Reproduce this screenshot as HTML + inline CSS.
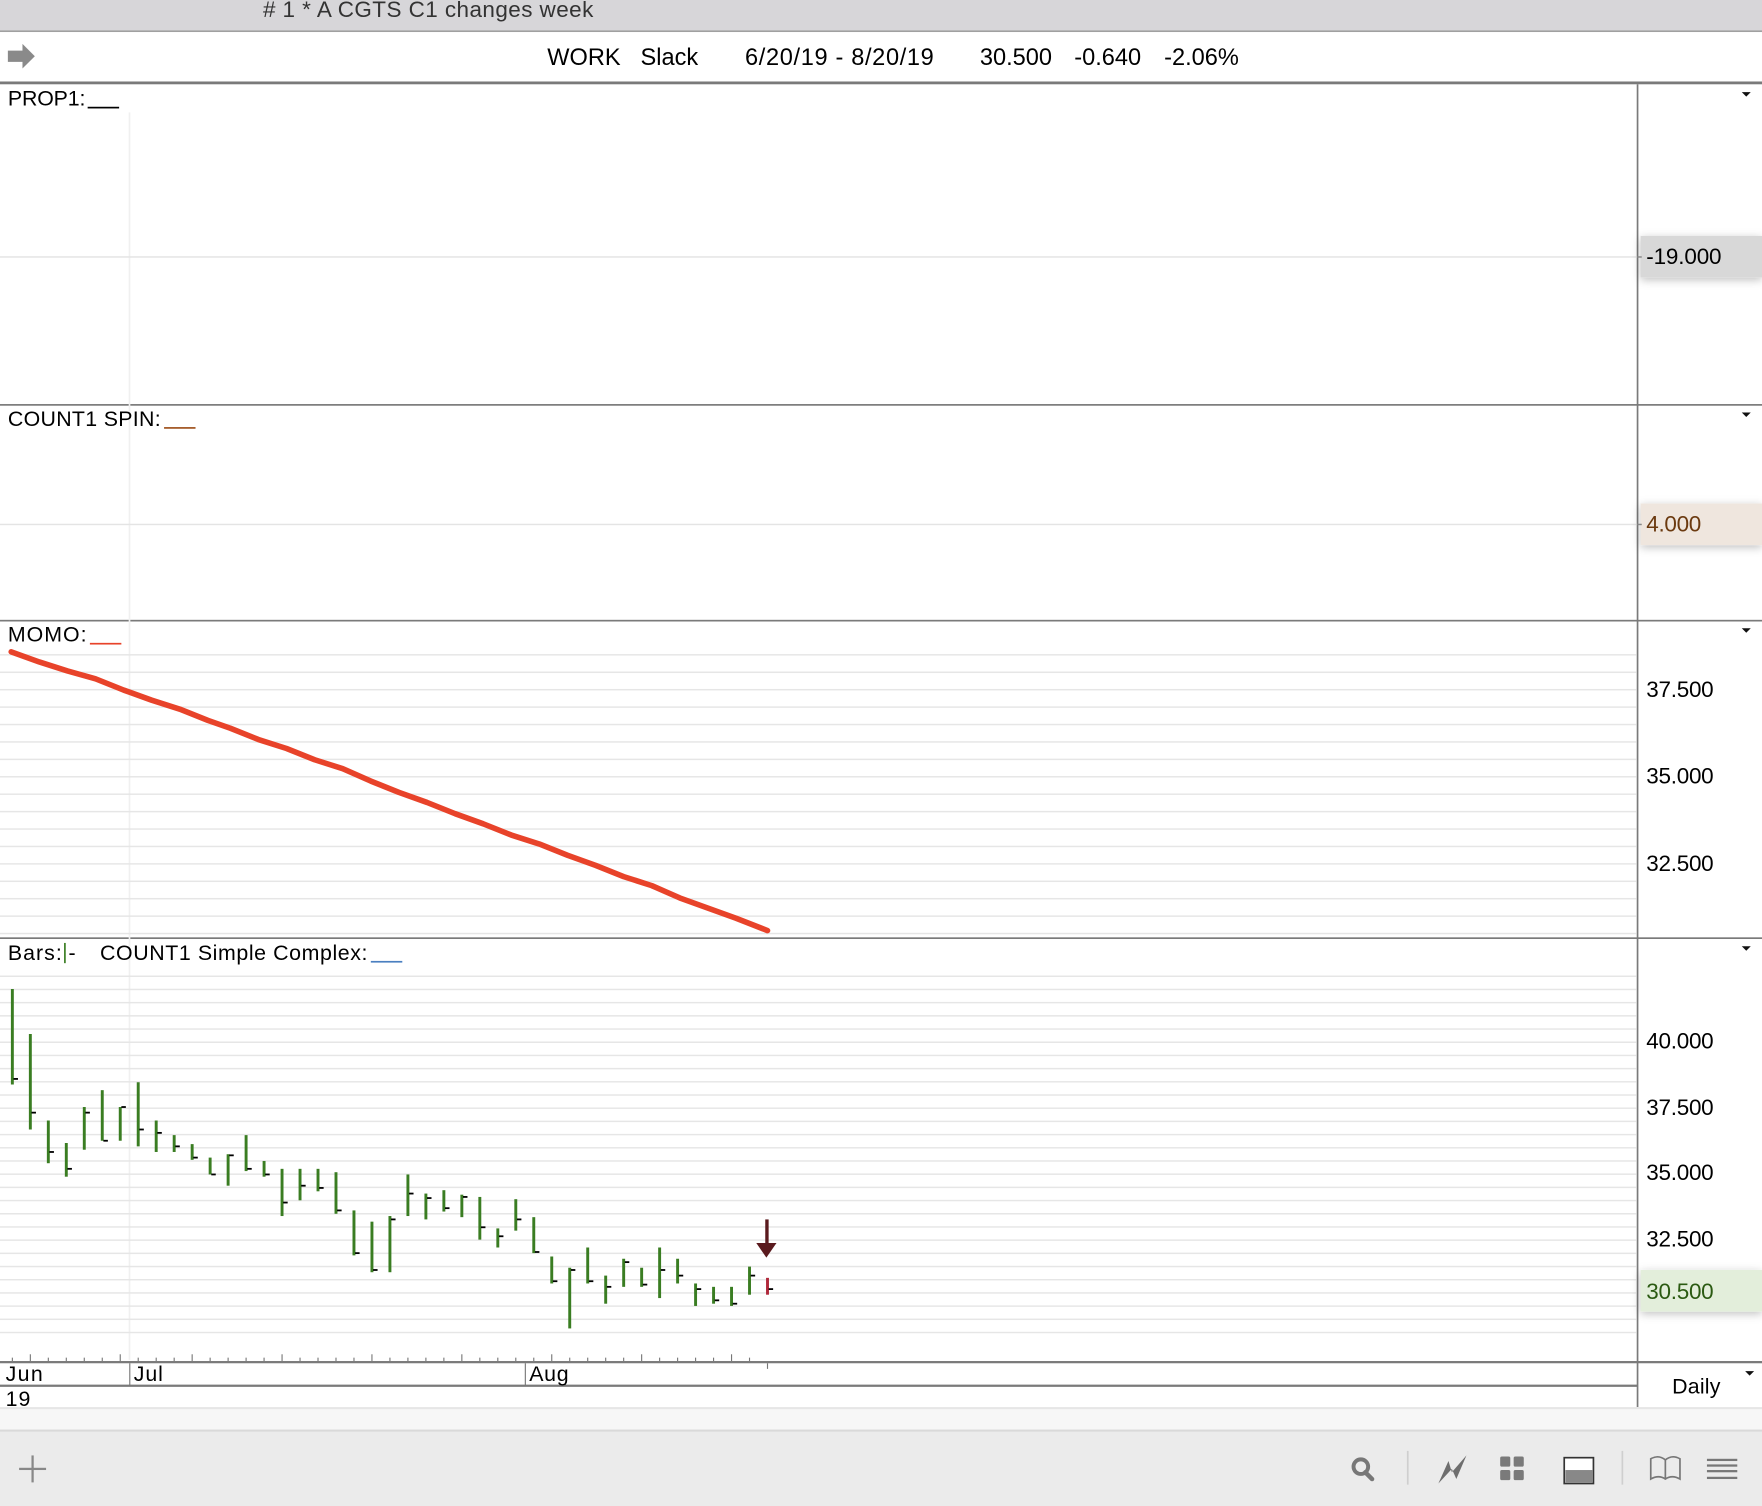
<!DOCTYPE html>
<html><head><meta charset="utf-8">
<style>
html,body{margin:0;padding:0;background:#fff;}
svg{display:block;}
text{font-family:"Liberation Sans",Arial,sans-serif;}
</style></head>
<body>
<svg width="1762" height="1506" viewBox="0 0 1568 1340" preserveAspectRatio="none" xmlns="http://www.w3.org/2000/svg">
<defs>
<pattern id="gm" patternUnits="userSpaceOnUse" x="0" y="582" width="10" height="15.5"><rect width="10" height="1.3" fill="#e6e6e6"/></pattern>
<pattern id="gb" patternUnits="userSpaceOnUse" x="0" y="868" width="10" height="11.74"><rect width="10" height="1.3" fill="#e6e6e6"/></pattern>
<filter id="sh" x="-10%" y="-60%" width="120%" height="220%"><feDropShadow dx="0" dy="2" stdDeviation="4" flood-color="#000" flood-opacity="0.25"/></filter>
</defs>
<rect width="1568" height="1340" fill="#fff"/>
<rect x="0" y="0" width="1568" height="27" fill="#d7d6d9"/>
<text x="234" y="15" font-size="20" fill="#333" textLength="294">#  1 * A CGTS  C1 changes week</text>
<rect x="0" y="27" width="1568" height="1.5" fill="#a0a0a0"/>
<path d="M7 45 H20 V39 L31 50 L20 61 V55 H7 Z" fill="#8a8a8a"/>
<g font-size="21" fill="#000">
<text x="487" y="58">WORK</text>
<text x="570" y="58">Slack</text>
<text x="663" y="58" textLength="168">6/20/19 - 8/20/19</text>
<text x="872" y="58">30.500</text>
<text x="956" y="58">-0.640</text>
<text x="1036" y="58">-2.06%</text>
</g>
<rect x="0" y="72.5" width="1568" height="2.5" fill="#7a7a7a"/>

<rect x="1456.5" y="75" width="1.5" height="1177" fill="#7a7a7a"/>
<rect x="0" y="359.5" width="1568" height="1.5" fill="#7a7a7a"/>
<rect x="0" y="551.5" width="1568" height="1.5" fill="#7a7a7a"/>
<rect x="0" y="834" width="1568" height="1.5" fill="#7a7a7a"/>
<rect x="0" y="1211" width="1568" height="2" fill="#7a7a7a"/>
<rect x="0" y="1232" width="1457" height="2" fill="#7a7a7a"/>
<rect x="114.5" y="100" width="1.5" height="1110" fill="#f0f0f0"/>

<path d="M1550 82 h8 l-4 4 z" fill="#111"/>
<path d="M1550 367 h8 l-4 4 z" fill="#111"/>
<path d="M1550 559 h8 l-4 4 z" fill="#111"/>
<path d="M1550 842 h8 l-4 4 z" fill="#111"/>
<path d="M1553 1220 h8 l-4 4 z" fill="#111"/>

<text x="7" y="94" font-size="19" fill="#000" textLength="69">PROP1:</text>
<rect x="78" y="95" width="28" height="1.5" fill="#000"/>
<rect x="0" y="228" width="1456" height="1.3" fill="#e4e4e4"/>
<rect x="1460" y="210" width="108" height="37" fill="#d8d8d8" filter="url(#sh)"/>
<text x="1465" y="235" font-size="20" fill="#000" textLength="67">-19.000</text>
<rect x="1457" y="228" width="4" height="1.3" fill="#888"/>

<text x="7" y="379" font-size="19" fill="#000" textLength="136">COUNT1 SPIN:</text>
<rect x="146" y="380" width="28" height="1.5" fill="#a0521d"/>
<rect x="0" y="466" width="1456" height="1.3" fill="#e4e4e4"/>
<rect x="1460" y="448" width="108" height="37" fill="#efe6de" filter="url(#sh)"/>
<text x="1465" y="473" font-size="20" fill="#6b3a10" textLength="49">4.000</text>
<rect x="1457" y="466" width="4" height="1.3" fill="#888"/>

<rect x="0" y="575" width="1456" height="258" fill="url(#gm)"/>
<text x="7" y="571" font-size="19" fill="#000" textLength="70">MOMO:</text>
<rect x="80" y="572" width="28" height="1.5" fill="#e8432a"/>
<g font-size="20" fill="#000">
<text x="1465" y="620" textLength="60">37.500</text>
<text x="1465" y="697" textLength="60">35.000</text>
<text x="1465" y="775" textLength="60">32.500</text>
</g>
<polyline fill="none" stroke="#e8432a" stroke-width="5" stroke-linejoin="round" stroke-linecap="round"
 points="10,580 35,589 60,597 85,604 110,614 135,623 160,631 185,641 205,648 230,658 255,666 280,676 305,684 330,695 355,705 380,714 405,724 430,733 455,743 480,751 505,761 530,770 555,780 580,788 605,799 630,808 655,817 683,828"/>

<rect x="0" y="866" width="1456" height="330" fill="url(#gb)"/>
<text x="7" y="854" font-size="19" fill="#000" textLength="48">Bars:</text>
<rect x="57" y="839" width="1.5" height="18" fill="#3a7d22"/>
<text x="61" y="854" font-size="19" fill="#000">-</text>
<text x="89" y="854" font-size="19" fill="#000" textLength="238">COUNT1 Simple Complex:</text>
<rect x="330" y="855" width="28" height="1.5" fill="#4a7fc0"/>
<g font-size="20" fill="#000">
<text x="1465" y="933" textLength="60">40.000</text>
<text x="1465" y="992" textLength="60">37.500</text>
<text x="1465" y="1050" textLength="60">35.000</text>
<text x="1465" y="1109" textLength="60">32.500</text>
</g>
<rect x="1460" y="1130" width="108" height="37" fill="#e3eedb" filter="url(#sh)"/>
<text x="1465" y="1156" font-size="20" fill="#2b5a12" textLength="60">30.500</text>

<g stroke="#3a7d22" stroke-width="2.6">
<line x1="11" y1="880" x2="11" y2="965"/><line x1="27" y1="920" x2="27" y2="1005"/>
<line x1="43" y1="997" x2="43" y2="1035"/><line x1="59" y1="1017" x2="59" y2="1047"/>
<line x1="75" y1="985" x2="75" y2="1023"/><line x1="91" y1="970" x2="91" y2="1015"/>
<line x1="107" y1="985" x2="107" y2="1015"/><line x1="123" y1="963" x2="123" y2="1020"/>
<line x1="139" y1="997" x2="139" y2="1025"/><line x1="155" y1="1010" x2="155" y2="1025"/>
<line x1="171" y1="1018" x2="171" y2="1032"/><line x1="187" y1="1030" x2="187" y2="1045"/>
<line x1="203" y1="1027" x2="203" y2="1055"/><line x1="219" y1="1010" x2="219" y2="1042"/>
<line x1="235" y1="1033" x2="235" y2="1047"/><line x1="251" y1="1040" x2="251" y2="1082"/>
<line x1="267" y1="1040" x2="267" y2="1068"/><line x1="283" y1="1040" x2="283" y2="1060"/>
<line x1="299" y1="1043" x2="299" y2="1080"/><line x1="315" y1="1077" x2="315" y2="1117"/>
<line x1="331" y1="1087" x2="331" y2="1132"/><line x1="347" y1="1082" x2="347" y2="1132"/>
<line x1="363" y1="1045" x2="363" y2="1082"/><line x1="379" y1="1062" x2="379" y2="1085"/>
<line x1="395" y1="1059" x2="395" y2="1078"/><line x1="411" y1="1063" x2="411" y2="1083"/>
<line x1="427" y1="1065" x2="427" y2="1103"/><line x1="443" y1="1093" x2="443" y2="1110"/>
<line x1="459" y1="1067" x2="459" y2="1095"/><line x1="475" y1="1083" x2="475" y2="1115"/>
<line x1="491" y1="1118" x2="491" y2="1142"/><line x1="507" y1="1128" x2="507" y2="1182"/>
<line x1="523" y1="1110" x2="523" y2="1142"/><line x1="539" y1="1135" x2="539" y2="1160"/>
<line x1="555" y1="1120" x2="555" y2="1145"/><line x1="571" y1="1128" x2="571" y2="1145"/>
<line x1="587" y1="1110" x2="587" y2="1155"/><line x1="603" y1="1120" x2="603" y2="1142"/>
<line x1="619" y1="1142" x2="619" y2="1162"/><line x1="635" y1="1145" x2="635" y2="1160"/>
<line x1="651" y1="1145" x2="651" y2="1162"/><line x1="667" y1="1127" x2="667" y2="1152"/>
</g>
<line x1="683" y1="1137" x2="683" y2="1152" stroke="#b0283a" stroke-width="2.6"/>
<g stroke="#000" stroke-width="1.6">
<line x1="12" y1="960" x2="16" y2="960"/><line x1="28" y1="990" x2="32" y2="990"/>
<line x1="44" y1="1025" x2="48" y2="1025"/><line x1="60" y1="1040" x2="64" y2="1040"/>
<line x1="76" y1="990" x2="80" y2="990"/><line x1="92" y1="1015" x2="96" y2="1015"/>
<line x1="108" y1="985" x2="112" y2="985"/><line x1="124" y1="1005" x2="128" y2="1005"/>
<line x1="140" y1="1008" x2="144" y2="1008"/><line x1="156" y1="1020" x2="160" y2="1020"/>
<line x1="172" y1="1030" x2="176" y2="1030"/><line x1="188" y1="1045" x2="192" y2="1045"/>
<line x1="204" y1="1028" x2="208" y2="1028"/><line x1="220" y1="1040" x2="224" y2="1040"/>
<line x1="236" y1="1045" x2="240" y2="1045"/><line x1="252" y1="1070" x2="256" y2="1070"/>
<line x1="268" y1="1055" x2="272" y2="1055"/><line x1="284" y1="1057" x2="288" y2="1057"/>
<line x1="300" y1="1077" x2="304" y2="1077"/><line x1="316" y1="1115" x2="320" y2="1115"/>
<line x1="332" y1="1130" x2="336" y2="1130"/><line x1="348" y1="1085" x2="352" y2="1085"/>
<line x1="364" y1="1062" x2="368" y2="1062"/><line x1="380" y1="1066" x2="384" y2="1066"/>
<line x1="396" y1="1075" x2="400" y2="1075"/><line x1="412" y1="1065" x2="416" y2="1065"/>
<line x1="428" y1="1092" x2="432" y2="1092"/><line x1="444" y1="1100" x2="448" y2="1100"/>
<line x1="460" y1="1085" x2="464" y2="1085"/><line x1="476" y1="1114" x2="480" y2="1114"/>
<line x1="492" y1="1140" x2="496" y2="1140"/><line x1="508" y1="1130" x2="512" y2="1130"/>
<line x1="524" y1="1140" x2="528" y2="1140"/><line x1="540" y1="1145" x2="544" y2="1145"/>
<line x1="556" y1="1123" x2="560" y2="1123"/><line x1="572" y1="1143" x2="576" y2="1143"/>
<line x1="588" y1="1130" x2="592" y2="1130"/><line x1="604" y1="1135" x2="608" y2="1135"/>
<line x1="620" y1="1147" x2="624" y2="1147"/><line x1="636" y1="1157" x2="640" y2="1157"/>
<line x1="652" y1="1160" x2="656" y2="1160"/><line x1="668" y1="1135" x2="672" y2="1135"/>
<line x1="684" y1="1147" x2="688" y2="1147"/>
</g>
<rect x="681" y="1085" width="3" height="22" fill="#5a1a1e"/>
<path d="M673 1106 H691 L682 1119 Z" fill="#5a1a1e"/>

<g stroke="#777" stroke-width="1">
<line x1="11" y1="1208" x2="11" y2="1211"/><line x1="27" y1="1205" x2="27" y2="1211"/>
<line x1="43" y1="1208" x2="43" y2="1211"/><line x1="59" y1="1208" x2="59" y2="1211"/>
<line x1="75" y1="1208" x2="75" y2="1211"/><line x1="91" y1="1208" x2="91" y2="1211"/>
<line x1="107" y1="1205" x2="107" y2="1211"/><line x1="123" y1="1208" x2="123" y2="1211"/>
<line x1="139" y1="1208" x2="139" y2="1211"/><line x1="155" y1="1208" x2="155" y2="1211"/>
<line x1="171" y1="1205" x2="171" y2="1211"/><line x1="187" y1="1208" x2="187" y2="1211"/>
<line x1="203" y1="1208" x2="203" y2="1211"/><line x1="219" y1="1208" x2="219" y2="1211"/>
<line x1="235" y1="1208" x2="235" y2="1211"/><line x1="251" y1="1205" x2="251" y2="1211"/>
<line x1="267" y1="1208" x2="267" y2="1211"/><line x1="283" y1="1208" x2="283" y2="1211"/>
<line x1="299" y1="1208" x2="299" y2="1211"/><line x1="315" y1="1208" x2="315" y2="1211"/>
<line x1="331" y1="1205" x2="331" y2="1211"/><line x1="347" y1="1208" x2="347" y2="1211"/>
<line x1="363" y1="1208" x2="363" y2="1211"/><line x1="379" y1="1208" x2="379" y2="1211"/>
<line x1="395" y1="1208" x2="395" y2="1211"/><line x1="411" y1="1205" x2="411" y2="1211"/>
<line x1="427" y1="1208" x2="427" y2="1211"/><line x1="443" y1="1208" x2="443" y2="1211"/>
<line x1="459" y1="1208" x2="459" y2="1211"/><line x1="475" y1="1208" x2="475" y2="1211"/>
<line x1="491" y1="1205" x2="491" y2="1211"/><line x1="507" y1="1208" x2="507" y2="1211"/>
<line x1="523" y1="1208" x2="523" y2="1211"/><line x1="539" y1="1208" x2="539" y2="1211"/>
<line x1="555" y1="1208" x2="555" y2="1211"/><line x1="571" y1="1205" x2="571" y2="1211"/>
<line x1="587" y1="1208" x2="587" y2="1211"/><line x1="603" y1="1208" x2="603" y2="1211"/>
<line x1="619" y1="1208" x2="619" y2="1211"/><line x1="635" y1="1208" x2="635" y2="1211"/>
<line x1="651" y1="1205" x2="651" y2="1211"/><line x1="667" y1="1208" x2="667" y2="1211"/>
<line x1="683" y1="1213" x2="683" y2="1218"/>
</g>
<rect x="115" y="1213" width="1" height="20" fill="#777"/>
<rect x="467" y="1213" width="1" height="20" fill="#777"/>
<g font-size="19" fill="#000">
<text x="5" y="1229" textLength="33">Jun</text>
<text x="119" y="1229" textLength="26">Jul</text>
<text x="471" y="1229" textLength="35">Aug</text>
<text x="5" y="1251" textLength="22">19</text>
<text x="1488" y="1240" textLength="43">Daily</text>
</g>

<rect x="0" y="1252" width="1568" height="2" fill="#e6e6e6"/>
<rect x="0" y="1254" width="1568" height="18" fill="#f7f7f7"/>
<rect x="0" y="1272" width="1568" height="2" fill="#d9d9d9"/>
<rect x="0" y="1274" width="1568" height="66" fill="#ebebeb"/>
<rect x="28" y="1295" width="2" height="24" fill="#888"/>
<rect x="17" y="1306" width="24" height="2" fill="#888"/>
<circle cx="1211" cy="1305" r="6.5" fill="none" stroke="#777" stroke-width="3.5"/>
<line x1="1215" y1="1310" x2="1221" y2="1316" stroke="#777" stroke-width="4" stroke-linecap="round"/>
<rect x="1252" y="1291" width="1.5" height="30" fill="#cfcfcf"/>
<path d="M1280 1320 L1289 1300 L1292 1310 L1305 1295 L1296 1316 L1292 1307 Z" fill="#6e6e6e"/>
<g fill="#7a7a7a"><rect x="1335" y="1296" width="9" height="9" rx="1.5"/><rect x="1347" y="1296" width="9" height="9" rx="1.5"/><rect x="1335" y="1308" width="9" height="9" rx="1.5"/><rect x="1347" y="1308" width="9" height="9" rx="1.5"/></g>
<rect x="1392" y="1297" width="26" height="23" fill="#fff" stroke="#333" stroke-width="1.5"/>
<rect x="1393" y="1308" width="24" height="11" fill="#888"/>
<rect x="1443" y="1291" width="1.5" height="30" fill="#cfcfcf"/>
<path d="M1469 1316 V1298 Q1476 1294 1482 1299 Q1488 1294 1495 1298 V1316 Q1488 1312 1482 1316 Q1476 1312 1469 1316 Z M1482 1299 V1316" fill="none" stroke="#777" stroke-width="1.5"/>
<g fill="#777"><rect x="1519" y="1298" width="27" height="2"/><rect x="1519" y="1303" width="27" height="2"/><rect x="1519" y="1308" width="27" height="2"/><rect x="1519" y="1314" width="27" height="2"/></g>
</svg>
</body></html>
